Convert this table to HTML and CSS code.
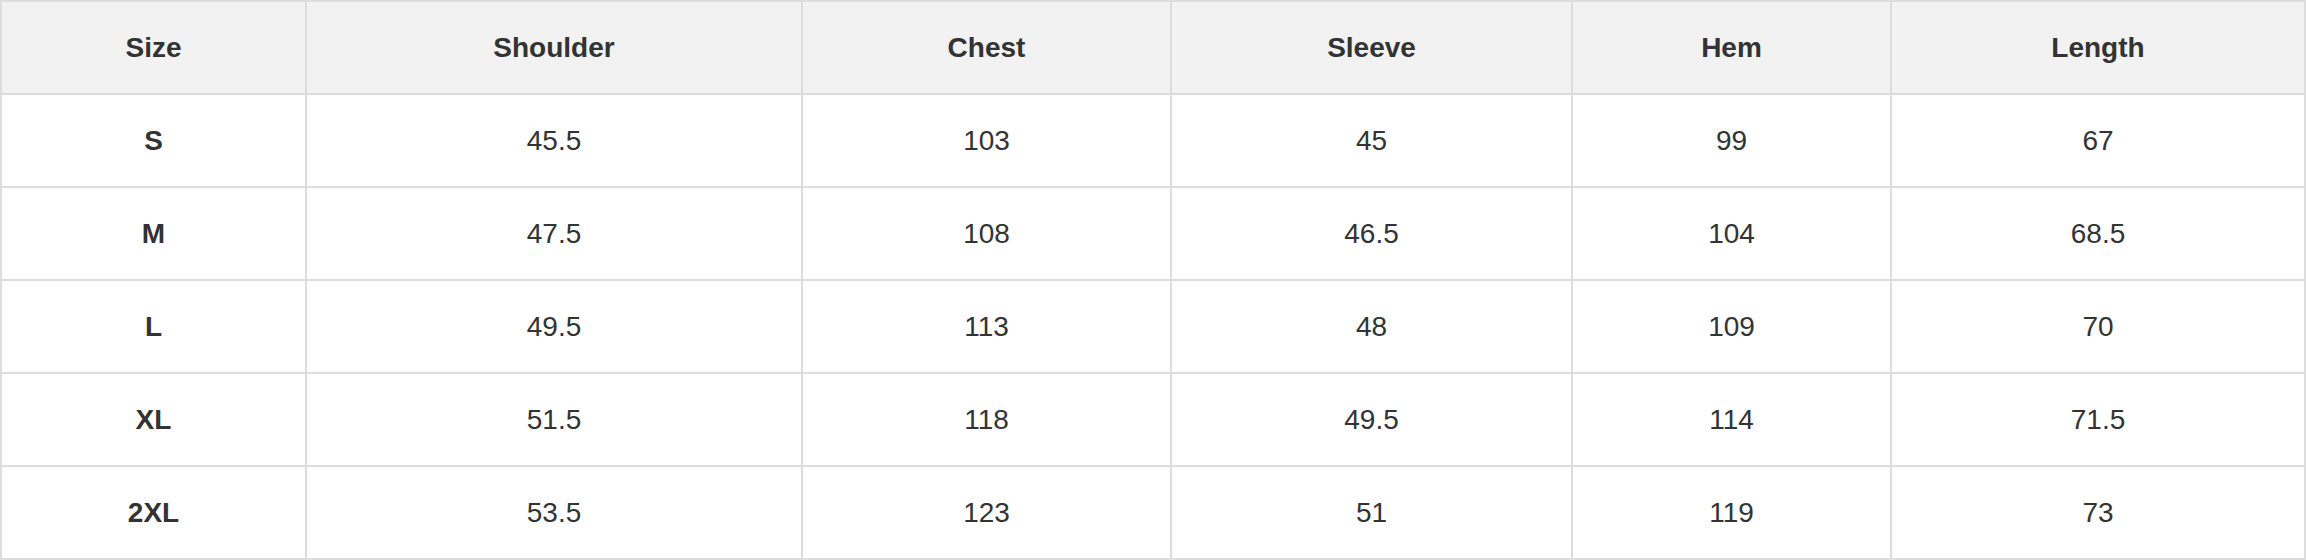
FILE: index.html
```html
<!DOCTYPE html>
<html>
<head>
<meta charset="utf-8">
<link rel="stylesheet" href="styles.css">
</head>
<body>
<table class="size-table">
  <thead>
    <tr><th class="c1">Size</th><th class="c2">Shoulder</th><th class="c3">Chest</th><th class="c4">Sleeve</th><th class="c5">Hem</th><th class="c6">Length</th></tr>
  </thead>
  <tbody>
    <tr><th>S</th><td>45.5</td><td>103</td><td>45</td><td>99</td><td>67</td></tr>
    <tr><th>M</th><td>47.5</td><td>108</td><td>46.5</td><td>104</td><td>68.5</td></tr>
    <tr><th>L</th><td>49.5</td><td>113</td><td>48</td><td>109</td><td>70</td></tr>
    <tr><th>XL</th><td>51.5</td><td>118</td><td>49.5</td><td>114</td><td>71.5</td></tr>
    <tr><th>2XL</th><td>53.5</td><td>123</td><td>51</td><td>119</td><td>73</td></tr>
  </tbody>
</table>
</body>
</html>
```

FILE: styles.css
```css
html, body {
  margin: 0;
  padding: 0;
  background: #ffffff;
}

.size-table {
  box-sizing: border-box;
  width: 2306px;
  border-collapse: separate;
  border-spacing: 0;
  table-layout: fixed;
  font-family: "Liberation Sans", Arial, Helvetica, sans-serif;
  font-size: 28px;
  color: #333333;
  border-top: 2px solid #dddddd;
  border-left: 2px solid #dddddd;
}

.size-table th,
.size-table td {
  box-sizing: border-box;
  height: 93px;
  border-right: 2px solid #dddddd;
  border-bottom: 2px solid #dddddd;
  text-align: center;
  vertical-align: middle;
  padding: 0;
}

.c1 { width: 305px; }
.c2 { width: 496px; }
.c3 { width: 369px; }
.c4 { width: 401px; }
.c5 { width: 319px; }
.c6 { width: 414px; }

.size-table th {
  font-weight: bold;
}

.size-table td {
  font-weight: normal;
}

.size-table thead th {
  background: #f2f2f2;
}
```
